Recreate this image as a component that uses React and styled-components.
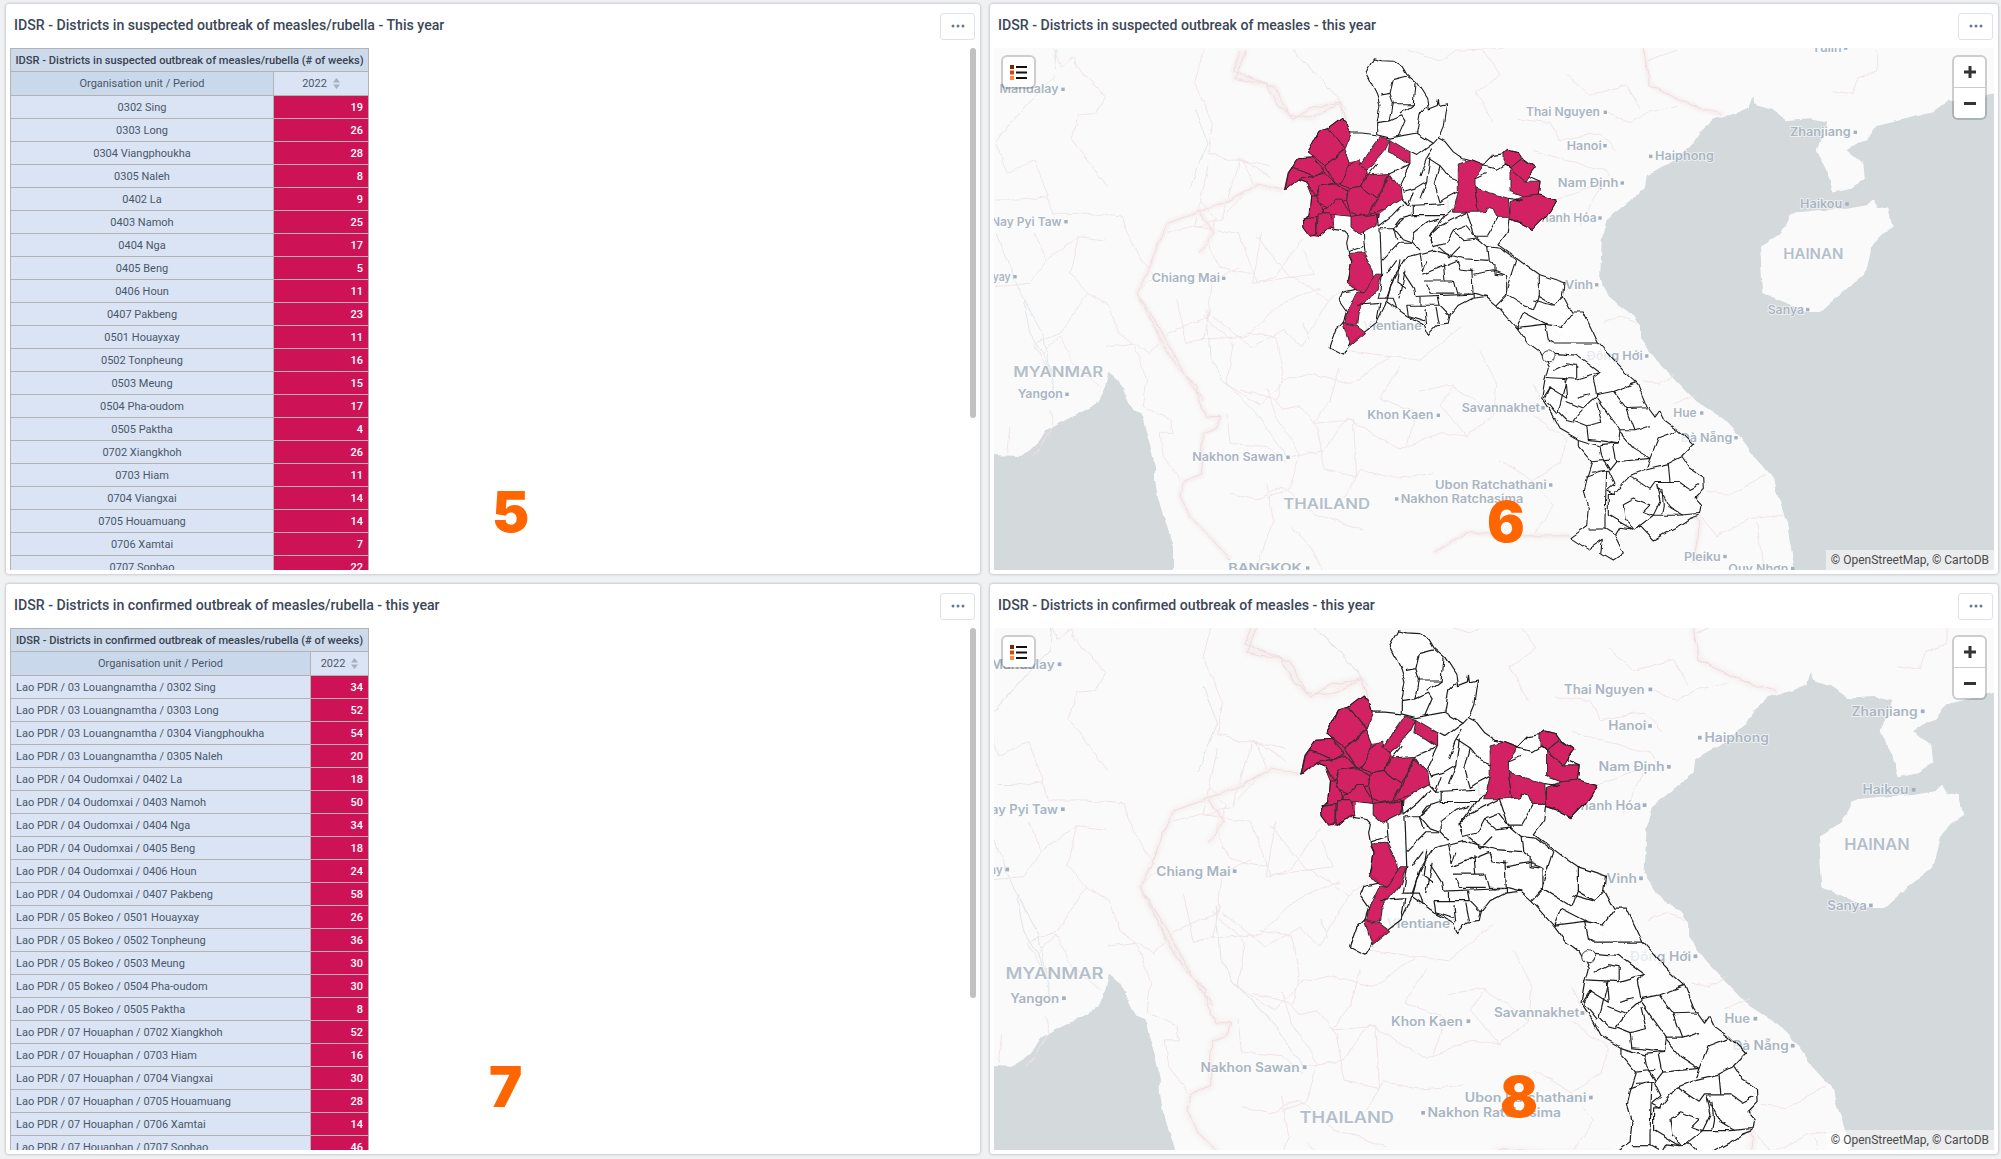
import React from "react";
import styled, { createGlobalStyle } from "styled-components";

const Global = createGlobalStyle`
  html, body { margin: 0; padding: 0; height: 100%; overflow: hidden; background: #f0f1f3; }
  body { font-family: Roboto, "Liberation Sans", sans-serif; }
`;

const Page = styled.div`
  display: grid;
  grid-template-columns: 974px 1008px;
  grid-template-rows: 570px 570px;
  gap: 10px;
  padding: 4px 3px 5px 6px;
`;
const Panel = styled.section`
  position: relative;
  display: flex;
  flex-direction: column;
  min-width: 0;
  background: #fff;
  border-radius: 3px;
  box-shadow: 0 0 3px rgba(64, 75, 90, 0.45);
`;
const PanelHeader = styled.header`
  flex: none;
  height: 44px;
  display: flex;
  align-items: center;
  justify-content: space-between;
  padding: 0 5px 0 8px;
`;
const PanelTitle = styled.h2`
  margin: 0 0 2px;
  font-size: 14.15px;
  font-weight: 500;
  color: #3c4757;
`;
const MenuButton = styled.button`
  width: 35px;
  height: 27px;
  display: flex;
  align-items: center;
  justify-content: center;
  padding: 0;
  background: #fff;
  border: 1px solid #dfe3e8;
  border-radius: 3px;
`;
const PanelBody = styled.div`
  flex: 1;
  min-height: 0;
  padding: 0 4px 4px;
`;
const ScrollArea = styled.div`
  position: relative;
  height: 522px;
  overflow: hidden;
`;
const ScrollThumb = styled.div`
  position: absolute;
  top: 0;
  right: 0;
  width: 6px;
  height: 370px;
  background: #c1c1c1;
  border-radius: 3px;
`;
const Table = styled.table`
  width: 359px;
  table-layout: fixed;
  border-collapse: collapse;
  font-size: 11px;
  color: #4a5768;
`;
const TitleCell = styled.th`
  height: 22px;
  padding: 0;
  background: #cddaec;
  border: 1px solid #b3b3b3;
  font-size: 11.12px;
  font-weight: 500;
  color: #38424f;
  text-align: center;
`;
const HeadCell = styled.th`
  height: 23px;
  padding: 0;
  background: ${(p) => (p.$light ? "#dae4f5" : "#cad8eb")};
  border: 1px solid #b3b3b3;
  font-weight: 400;
  text-align: center;
`;
const NameCell = styled.td`
  height: 22px;
  padding: 0 5px;
  background: #dae4f5;
  border: 1px solid #b3b3b3;
  text-align: ${(p) => (p.$left ? "left" : "center")};
  white-space: nowrap;
`;
const ValueCell = styled.td`
  padding: 0 5px;
  background: #ce1256;
  border: 1px solid #b3b3b3;
  color: #fff;
  font-weight: 500;
  text-align: right;
`;
const SortIcon = styled.svg`
  width: 7px;
  height: 11px;
  margin-left: 6px;
  vertical-align: -2px;
`;
const Digit = styled.span`
  position: absolute;
  left: ${(p) => p.$x}px;
  top: ${(p) => p.$y}px;
  font-family: Inter, sans-serif;
  font-size: 56px;
  font-weight: 900;
  line-height: 1;
  color: #ff6600;
`;
const MapBox = styled.div`
  position: relative;
  height: 522px;
  overflow: hidden;
  background: #fafafa;
`;
const MapSvg = styled.svg`
  display: block;
  width: 1000px;
  height: 522px;
`;
const MapControl = styled.div`
  position: absolute;
  top: 9px;
  ${(p) => (p.$right ? "right: 9px;" : "left: 9px;")}
  width: 31px;
  background: #fff;
  border-radius: 4px;
  box-shadow: 0 0 0 2px rgba(0, 0, 0, 0.18);
`;
const ControlButton = styled.div`
  height: 30px;
  display: flex;
  align-items: center;
  justify-content: center;
  & + & { border-top: 1px solid #ccc; }
`;
const Attribution = styled.div`
  position: absolute;
  right: 0;
  bottom: 0;
  padding: 0 5px;
  height: 20px;
  line-height: 20px;
  font-size: 12px;
  color: #4a4a4a;
  background: rgba(255, 255, 255, 0.5);
`;
const CityText = styled.text`
  font-family: Inter, sans-serif;
  font-size: 11.5px;
  font-weight: 600;
  fill: #a9b5c3;
  stroke: rgba(255, 255, 255, 0.7);
  stroke-width: 1.5px;
  paint-order: stroke;
`;
const CountryText = styled(CityText)`
  font-size: 14px;
  fill: #b4bfcb;
`;

// helpers: every zoomed crop of the map had its own scale, so points stay in crop units
const z3 = (p) => p.map(([x, y]) => [x / 3 + 206, y / 2.904 - 8]);
const z8 = (p) => p.map(([x, y]) => [x / 3 + 606, y / 2.904 - 8]);
const z9 = (p) => p.map(([x, y]) => [x / 3 - 4, y / 3 + 252]);
const z2 = (p) => p.map(([x, y]) => [x / 2.24 - 94, y / 3 - 48]);
const pts = (p) => p.map(([x, y]) => `${x.toFixed(1)},${y.toFixed(1)}`).join(" ");

const eastSea = z8([[1190, 150], [1100, 185], [1050, 175], [1000, 210], [915, 230], [830, 250], [800, 290], [770, 300], [740, 320], [790, 360], [795, 405], [750, 430], [700, 440], [680, 385], [650, 320], [680, 240], [630, 230], [560, 235], [510, 200], [470, 190], [460, 165], [450, 195], [400, 215], [340, 230], [300, 265], [270, 310], [200, 365], [140, 390], [135, 430], [60, 490], [20, 520], [5, 580], [0, 700], [30, 750], [100, 800], [120, 830], [120, 865], [170, 930], [225, 985], [290, 1050], [370, 1100], [420, 1150], [470, 1220], [520, 1270], [525, 1300], [560, 1400], [585, 1545], [1190, 1545]]);
const hainan = z8([[600, 500], [640, 495], [740, 490], [800, 480], [820, 462], [835, 485], [865, 490], [878, 545], [845, 565], [820, 590], [795, 680], [750, 715], [700, 755], [660, 790], [620, 790], [550, 760], [490, 735], [485, 680], [480, 600], [540, 565], [570, 510]]);
const westSea = z9([[0, 465], [90, 468], [120, 450], [150, 420], [165, 395], [210, 370], [260, 345], [290, 330], [325, 310], [345, 260], [355, 215], [385, 240], [410, 290], [430, 330], [455, 340], [465, 385], [480, 430], [495, 500], [495, 540], [505, 600], [525, 660], [552, 740], [552, 830], [0, 830]]);

const nationalBorders = [
  z2([[860, 570], [800, 555], [740, 600], [660, 640], [600, 670], [575, 740], [560, 800], [530, 880]]),
  z9([[450, 0], [490, 70], [520, 140], [570, 210], [620, 260], [625, 300], [650, 350], [690, 350], [680, 385], [640, 400], [635, 440], [635, 525], [580, 545], [570, 590], [600, 650], [660, 710], [720, 780]]),
  z2([[775, 150], [750, 235], [840, 260], [870, 345], [920, 355], [985, 310]]),
  z2([[530, 880], [570, 960], [620, 1080], [650, 1150], [680, 1200]]),
  z3([[120, 30], [100, 90], [200, 130], [235, 190], [280, 230], [330, 200], [420, 180], [440, 240]]),
  z8([[130, 24], [150, 130], [220, 165], [300, 200], [370, 215]]),
  z3([[700, 1490], [800, 1430], [950, 1440], [1110, 1440]]),
  z3([[0, 500], [40, 560], [0, 620]]),
  z8([[280, 1520], [300, 1400], [270, 1340]]),
];
const provinceLines = [
  z2([[345, 150], [360, 200], [390, 170], [395, 200], [460, 290], [440, 340], [400, 345], [385, 420], [420, 480], [465, 560]]),
  z2([[680, 150], [660, 250], [700, 370], [690, 460], [740, 480], [770, 480], [830, 530]]),
  z2([[215, 430], [240, 520], [300, 480], [330, 580], [340, 640], [420, 640], [495, 650], [510, 700], [540, 780], [570, 830], [525, 880]]),
  z2([[212, 600], [270, 600], [330, 590]]),
  z2([[460, 720], [400, 710], [380, 820], [420, 880], [470, 920], [490, 1000], [560, 1060]]),
  z2([[690, 500], [660, 680], [760, 700], [800, 850], [840, 830], [900, 720]]),
  z2([[810, 700], [790, 850], [880, 830], [960, 900], [1000, 860]]),
  z2([[900, 1040], [960, 900]]),
  z2([[600, 700], [720, 660], [760, 480], [830, 500]]),
  z2([[330, 780], [400, 710]]),
  z2([[215, 860], [290, 850], [330, 780], [300, 700]]),
  z2([[420, 880], [360, 1000], [300, 1030], [340, 1130]]),
  z2([[560, 1060], [600, 1000], [690, 950], [700, 840], [760, 800]]),
  z2([[700, 950], [790, 1040], [860, 990], [900, 1040]]),
  z9([[350, 140], [430, 130], [470, 240], [460, 320], [540, 360], [550, 400], [510, 400], [520, 470], [570, 540]]),
  z9([[710, 340], [720, 430], [830, 440], [890, 490]]),
  z9([[750, 270], [850, 295], [880, 330], [930, 320], [980, 380], [990, 430], [1005, 510], [1100, 530]]),
  z9([[770, 100], [860, 110], [880, 210], [860, 300]]),
  z9([[160, 160], [210, 110], [250, 190], [330, 260]]),
  z9([[180, 330], [190, 380], [130, 470]]),
  z9([[60, 380], [50, 460]]),
  z9([[720, 580], [800, 600], [880, 560], [970, 640], [1120, 690]]),
  z9([[830, 550], [850, 660], [800, 800]]),
  z9([[560, 0], [590, 130], [640, 120], [660, 30]]),
  z9([[1050, 200], [1020, 300], [970, 370], [1090, 360], [1100, 530]]),
  z9([[900, 680], [960, 740], [1000, 810]]),
  z3([[0, 470], [50, 520], [20, 580], [60, 660], [160, 680]]),
  z3([[170, 570], [270, 690], [340, 680], [310, 610]]),
  z3([[130, 350], [160, 420], [80, 500]]),
  z3([[0, 870], [140, 860], [250, 760], [360, 720]]),
  z3([[10, 800], [100, 880], [80, 1000], [180, 1060], [250, 990], [330, 970]]),
  z3([[430, 900], [580, 920], [660, 930], [790, 830]]),
  z3([[330, 970], [450, 1000], [570, 920]]),
  z3([[660, 1020], [750, 1000], [800, 1030], [880, 1090], [890, 1000], [840, 900]]),
  z3([[500, 1130], [600, 1190], [720, 1140], [800, 1150], [880, 1090]]),
  z3([[200, 1010], [230, 1100], [300, 1200], [270, 1300], [200, 1330]]),
  z3([[270, 1210], [370, 1190], [440, 1100], [500, 1130]]),
  z3([[430, 1330], [480, 1250], [580, 1270], [700, 1260]]),
  z3([[970, 1080], [1030, 1070], [1000, 1000]]),
  z3([[1080, 1230], [1000, 1280], [1060, 1350], [1000, 1440]]),
  z3([[850, 30], [900, 100], [830, 150], [880, 240]]),
  z3([[620, 30], [720, 60], [770, 30], [910, 24]]),
  z3([[950, 230], [1050, 240], [1080, 290], [1200, 270], [1250, 320]]),
  z3([[1000, 320], [1100, 350], [1220, 380], [1250, 420]]),
  z3([[1050, 470], [1200, 420], [1140, 540]]),
  z3([[1340, 60], [1430, 30]]),
  z3([[600, 950], [540, 1040], [650, 1080], [620, 1180]]),
  z3([[760, 1000], [720, 1060], [800, 1150]]),
  z3([[1000, 1090], [1100, 1160], [1080, 1230]]),
  z3([[900, 1220], [1000, 1280]]),
  z3([[1100, 100], [1170, 160], [1280, 130], [1320, 200]]),
  z8([[320, 1310], [390, 1320], [500, 1265]]),
  z8([[300, 1380], [350, 1440], [450, 1390], [550, 1380]]),
  z8([[490, 1538], [470, 1400]]),
  z8([[10, 820], [60, 805], [110, 820]]),
  z8([[130, 985], [180, 1000], [225, 970]]),
  z8([[220, 1060], [290, 1030]]),
  z8([[700, 150], [760, 160], [770, 110], [830, 90], [830, 30]]),
  z8([[20, 210], [90, 240], [150, 210], [230, 190]]),
];
const rivers = [
  z2([[350, 150], [345, 230], [250, 370], [215, 420]]),
  z2([[880, 150], [950, 250], [1000, 330]]),
  z2([[660, 330], [690, 430], [650, 560]]),
  z2([[215, 700], [270, 880], [320, 1000], [340, 1130]]),
  z9([[100, 0], [120, 100], [170, 180], [200, 300]]),
  z9([[650, 30], [660, 170], [700, 240], [800, 340], [890, 470]]),
  z3([[310, 820], [330, 870]]),
  z3([[1060, 840], [1100, 870]]),
];

const laos = z3([[520, 55], [545, 60], [580, 62], [605, 75], [620, 100], [650, 125], [680, 170], [685, 200], [712, 190], [715, 170], [718, 190], [740, 185], [735, 215], [730, 250], [715, 285], [735, 295], [760, 325], [790, 345], [810, 350], [850, 365], [880, 335], [912, 330], [925, 318], [955, 325], [970, 345], [1005, 370], [985, 395], [1020, 410], [1015, 450], [1068, 465], [1050, 495], [1030, 520], [1000, 550], [960, 530], [930, 520], [925, 555], [895, 595], [930, 620], [985, 660], [1015, 680], [1095, 705], [1090, 745], [1115, 790], [1150, 790], [1195, 880], [1240, 930], [1270, 960], [1310, 995], [1335, 1055], [1365, 1095], [1380, 1075], [1395, 1105], [1430, 1130], [1478, 1175], [1445, 1208], [1470, 1245], [1508, 1270], [1510, 1305], [1485, 1330], [1503, 1350], [1498, 1380], [1470, 1390], [1440, 1410], [1400, 1430], [1360, 1452], [1320, 1412], [1295, 1420], [1260, 1415], [1245, 1440], [1270, 1490], [1240, 1510], [1205, 1490], [1210, 1450], [1165, 1480], [1110, 1445], [1160, 1410], [1165, 1360], [1150, 1310], [1160, 1270], [1175, 1225], [1135, 1180], [1135, 1160], [1080, 1130], [1055, 1085], [1025, 1040], [1035, 985], [1045, 950], [1020, 905], [985, 880], [950, 835], [890, 770], [860, 745], [815, 750], [775, 770], [750, 800], [745, 825], [710, 830], [685, 855], [670, 825], [620, 800], [590, 780], [560, 760], [530, 820], [490, 850], [445, 890], [430, 915], [390, 895], [410, 840], [430, 820], [440, 790], [415, 755], [425, 730], [470, 720], [445, 700], [455, 640], [445, 615], [440, 590], [445, 565], [435, 555], [405, 550], [390, 540], [355, 570], [330, 565], [312, 545], [310, 520], [330, 510], [335, 450], [320, 415], [290, 405], [253, 437], [265, 385], [295, 345], [340, 342], [322, 328], [360, 262], [385, 255], [425, 225], [440, 240], [450, 270], [485, 270], [530, 275], [530, 240], [540, 190], [530, 160], [497, 95]]);

// the whole north-west block, laid under the single districts so no gaps show between them
const outbreakBlock = z3([[385, 255], [425, 225], [440, 240], [450, 275], [435, 315], [450, 355], [475, 350], [500, 375], [505, 390], [570, 388], [600, 430], [605, 460], [555, 490], [535, 505], [530, 540], [480, 565], [450, 540], [450, 515], [405, 510], [405, 545], [385, 545], [355, 570], [330, 570], [312, 545], [310, 520], [330, 510], [335, 450], [320, 415], [290, 405], [253, 437], [265, 385], [295, 345], [340, 342], [322, 328], [360, 262]]);
const outbreak = [
  [[385, 255], [425, 225], [440, 240], [450, 275], [435, 315], [410, 285]],
  [[360, 262], [385, 255], [410, 285], [435, 315], [375, 365], [345, 342], [322, 328]],
  [[435, 318], [450, 355], [445, 390], [415, 420], [405, 415], [375, 365]],
  [[295, 345], [340, 342], [375, 380], [345, 395], [275, 372]],
  [[275, 372], [345, 395], [295, 405], [255, 437], [265, 390]],
  [[295, 405], [345, 395], [375, 385], [405, 415], [355, 425], [345, 450], [320, 415]],
  [[355, 425], [405, 418], [445, 440], [440, 465], [405, 475], [385, 488], [360, 478], [350, 450]],
  [[335, 450], [350, 450], [360, 478], [370, 510], [355, 515], [310, 520], [330, 510]],
  [[370, 490], [385, 488], [405, 465], [425, 465], [445, 495], [450, 515], [405, 510], [370, 505]],
  [[420, 420], [455, 360], [475, 350], [500, 375], [485, 425], [445, 430]],
  [[445, 430], [485, 425], [530, 460], [505, 505], [475, 510], [450, 500], [440, 465]],
  [[485, 425], [500, 392], [570, 388], [530, 460]],
  [[570, 392], [600, 430], [605, 460], [555, 490], [510, 505], [535, 460]],
  [[450, 515], [535, 505], [530, 540], [480, 565], [450, 540]],
  [[310, 520], [350, 515], [350, 565], [330, 570], [312, 545]],
  [[355, 505], [390, 505], [405, 545], [385, 545], [355, 570], [350, 565]],
  [[480, 365], [510, 320], [540, 280], [570, 290], [555, 320], [520, 360], [500, 375]],
  [[570, 290], [630, 325], [630, 360], [600, 340], [565, 325]],
  [[810, 350], [850, 365], [825, 400], [825, 430], [835, 500], [760, 500], [775, 440], [775, 360]],
  [[825, 430], [925, 460], [930, 515], [890, 515], [880, 490], [860, 485], [855, 498], [835, 500]],
  [[930, 470], [970, 455], [1020, 450], [1068, 465], [1050, 495], [1030, 520], [1000, 550], [960, 530], [930, 520]],
  [[930, 372], [975, 410], [1020, 410], [1015, 450], [970, 455], [930, 440]],
  [[930, 372], [965, 345], [1005, 370], [985, 395], [975, 410]],
  [[912, 330], [925, 318], [955, 325], [965, 345], [930, 370], [912, 360]],
  [[445, 620], [490, 618], [520, 670], [525, 700], [490, 735], [445, 710], [455, 640]],
  [[530, 680], [548, 680], [530, 725], [475, 790], [470, 825], [435, 820], [440, 790], [470, 730], [490, 735]],
  [[428, 820], [470, 828], [500, 850], [450, 890]],
].map(z3);

const districtLines = [
  [[570, 155], [580, 115], [620, 105]],
  [[570, 155], [540, 160]],
  [[570, 155], [580, 185], [570, 235], [605, 220], [615, 235], [595, 280]],
  [[580, 185], [640, 185], [645, 125]],
  [[640, 185], [600, 215]],
  [[530, 240], [570, 235]],
  [[530, 275], [570, 285], [595, 280], [650, 270], [660, 215], [680, 195]],
  [[650, 270], [700, 300], [650, 335], [630, 325]],
  [[700, 300], [712, 288]],
  [[695, 315], [680, 340], [660, 395]],
  [[630, 360], [600, 420], [610, 440], [645, 430], [680, 410], [690, 340]],
  [[720, 365], [705, 420], [720, 470], [735, 460], [775, 440]],
  [[720, 365], [680, 340]],
  [[720, 365], [750, 400], [775, 410]],
  [[605, 460], [625, 480], [640, 440]],
  [[625, 480], [640, 480], [735, 475]],
  [[680, 410], [660, 460]],
  [[505, 390], [530, 360]],
  [[600, 375], [630, 360]],
  [[570, 388], [600, 375]],
  [[850, 365], [890, 375], [915, 360], [930, 372]],
  [[825, 400], [860, 385]],
  [[925, 460], [965, 465]],
  [[530, 505], [535, 540], [575, 510], [610, 475]],
  [[540, 545], [580, 545], [610, 580], [640, 590]],
  [[580, 545], [600, 520], [640, 510], [640, 480]],
  [[640, 510], [735, 510], [760, 490]],
  [[735, 510], [690, 570], [700, 600]],
  [[540, 545], [545, 680]],
  [[490, 560], [495, 620]],
  [[445, 615], [490, 600]],
  [[545, 640], [595, 590], [640, 590], [660, 610]],
  [[610, 520], [580, 545], [590, 580]],
  [[640, 590], [640, 560], [680, 530], [720, 520]],
  [[685, 570], [720, 540], [800, 500]],
  [[690, 570], [700, 600], [740, 590], [760, 555], [800, 540], [830, 575]],
  [[800, 500], [825, 570], [860, 570], [890, 520]],
  [[760, 555], [790, 580], [830, 575], [860, 600], [865, 640]],
  [[715, 600], [750, 630], [780, 600]],
  [[660, 620], [700, 610], [790, 635], [865, 640], [885, 655], [885, 680], [920, 685]],
  [[620, 630], [660, 620]],
  [[620, 630], [580, 690], [560, 760]],
  [[610, 675], [640, 720], [645, 745]],
  [[615, 670], [600, 750]],
  [[590, 640], [560, 680]],
  [[548, 680], [535, 750]],
  [[660, 620], [670, 670], [680, 640]],
  [[670, 680], [720, 660], [770, 640], [780, 665], [820, 670]],
  [[675, 700], [720, 700], [760, 700], [770, 735], [815, 735]],
  [[680, 710], [690, 735], [760, 735]],
  [[815, 660], [820, 750]],
  [[820, 680], [880, 670], [920, 685], [920, 740], [890, 770]],
  [[820, 735], [860, 745]],
  [[645, 745], [820, 738]],
  [[620, 770], [660, 770], [660, 745]],
  [[660, 770], [720, 770], [715, 745]],
  [[620, 770], [625, 800], [675, 815]],
  [[675, 780], [680, 830]],
  [[705, 775], [715, 825]],
  [[720, 770], [750, 800]],
  [[530, 750], [580, 750], [590, 780]],
  [[475, 770], [540, 765], [530, 820]],
  [[560, 750], [585, 680]],
  [[950, 640], [925, 715], [920, 740]],
  [[860, 600], [900, 605], [950, 640]],
  [[1015, 680], [1015, 745], [1060, 770], [1090, 745]],
  [[915, 735], [1000, 785], [1015, 745]],
  [[970, 790], [950, 835], [1035, 825], [1085, 835], [1115, 795]],
  [[1000, 755], [1055, 770]],
  [[970, 790], [1040, 825]],
  [[1035, 825], [1045, 870], [1060, 880], [1195, 880]],
  [[1060, 910], [1130, 915], [1200, 965]],
  [[1040, 980], [1130, 985], [1200, 965], [1180, 980]],
  [[1130, 945], [1130, 985]],
  [[1095, 985], [1100, 1040], [1050, 1010], [1030, 1040]],
  [[1180, 980], [1190, 1035], [1150, 1070], [1120, 1105], [1160, 1120]],
  [[1100, 1050], [1150, 1070]],
  [[1100, 980], [1075, 1080], [1100, 1105], [1120, 1110]],
  [[1050, 1010], [1035, 1045], [1070, 1085]],
  [[1190, 1030], [1240, 1020], [1310, 995]],
  [[1240, 1020], [1280, 1070], [1350, 1068]],
  [[1280, 1070], [1305, 1135], [1350, 1120]],
  [[1190, 1050], [1205, 1110], [1160, 1120], [1165, 1160], [1255, 1170], [1260, 1135], [1305, 1135]],
  [[1190, 1040], [1250, 1120], [1260, 1135]],
  [[1260, 1140], [1300, 1185], [1350, 1215]],
  [[1350, 1215], [1375, 1155], [1430, 1135]],
  [[1255, 1170], [1200, 1175], [1205, 1210]],
  [[1240, 1175], [1250, 1225], [1350, 1215], [1340, 1240]],
  [[1205, 1210], [1230, 1250], [1250, 1225]],
  [[1135, 1160], [1200, 1180]],
  [[1175, 1225], [1230, 1220]],
  [[1175, 1255], [1225, 1250], [1245, 1290], [1220, 1310]],
  [[1155, 1270], [1220, 1250], [1215, 1385]],
  [[1215, 1420], [1165, 1420]],
  [[1215, 1385], [1215, 1420], [1250, 1440]],
  [[1220, 1310], [1240, 1320], [1290, 1265], [1340, 1245]],
  [[1290, 1265], [1350, 1305]],
  [[1350, 1305], [1365, 1285], [1440, 1285], [1470, 1305], [1500, 1290]],
  [[1340, 1245], [1405, 1230], [1445, 1210]],
  [[1405, 1230], [1410, 1285]],
  [[1245, 1320], [1225, 1320], [1225, 1380], [1295, 1420]],
  [[1270, 1345], [1300, 1330], [1350, 1350], [1330, 1370], [1360, 1380], [1380, 1340], [1370, 1290]],
  [[1270, 1345], [1275, 1390], [1300, 1420], [1320, 1410], [1360, 1380]],
  [[1360, 1380], [1430, 1380], [1498, 1375]],
  [[1370, 1290], [1410, 1360], [1445, 1380]],
  [[1385, 1300], [1390, 1350], [1385, 1375]],
  [[600, 640], [590, 700], [620, 720]],
  [[730, 650], [735, 700]],
  [[1060, 960], [1100, 940], [1130, 945]],
  [[1130, 1040], [1170, 1030]],
].map(z3);

// name, left, right, middle y, dot x (map coordinates of the first map)
const cities = [
  ["Mandalay", 5.6, 64.5, 41.3, 69],
  ["Nay Pyi Taw", -3, 67.6, 173.7, 72],
  ["Pyay", -8, 16.7, 228.7, 21],
  ["Chiang Mai", 157.8, 226, 230.3, 229.7],
  ["Yangon", 23.7, 68.7, 346.3, 73],
  ["Nakhon Sawan", 198.3, 289.3, 409.3, 294],
  ["BANGKOK", 234.3, 307.7, 520, 313.7],
  ["Khon Kaen", 373.3, 439.3, 367.3, 444.3],
  ["Savannakhet", 467.7, 546, 359.8, 549],
  ["Ubon Ratchathani", 441, 552.7, 437, 556.7],
  ["Nakhon Ratchasima", 406.7, 529.3, 451, 402.7],
  ["Vientiane", 369.3, 427.7, 277.8],
  ["Thai Nguyen", 532, 606, 64.3, 611.3],
  ["Hanoi", 572.7, 607.7, 97.7, 611],
  ["Haiphong", 661, 720, 108.4, 656.7],
  ["Nam Định", 563.7, 624.3, 135, 628.3],
  ["Thanh Hóa", 539.3, 602.7, 170, 606],
  ["Vinh", 571, 599, 236.8, 602.7],
  ["Đồng Hới", 592.7, 648.7, 308, 652.7],
  ["Hue", 679.3, 702.7, 365, 707.7],
  ["Đà Nẵng", 686.7, 738.3, 389.7, 742],
  ["Pleiku", 690, 726.7, 508.5, 731],
  ["Quy Nhơn", 734.3, 794.3, 520.6, 798.7],
  ["Zhanjiang", 796, 856.7, 84.3, 861.3],
  ["Haikou", 806, 848.3, 156, 853],
  ["Sanya", 773.7, 810, 261.6, 813.7],
  ["Yulin", 817.7, 847.7, 0, 851.7],
];
const countries = [
  ["MYANMAR", 19.3, 109.3, 323.7],
  ["THAILAND", 289.3, 376, 455.3],
  ["HAINAN", 789.3, 849.3, 205.5],
  ["LAOS", 452, 489, 157],
];

function LaosMap({ zoomed }) {
  return (
    <MapBox>
      <MapSvg viewBox="0 0 1000 522">
        <defs>
          <filter id="wobble" filterUnits="userSpaceOnUse" x="-20" y="-20" width="1040" height="570">
            <feTurbulence type="fractalNoise" baseFrequency="0.08" numOctaves="2" seed="4" />
            <feDisplacementMap in="SourceGraphic" scale="5" xChannelSelector="R" yChannelSelector="G" />
            <feGaussianBlur stdDeviation="0.25" />
          </filter>
          <filter id="soft" x="-5%" y="-5%" width="110%" height="110%">
            <feGaussianBlur stdDeviation="1.8" />
          </filter>
        </defs>
        <g transform={zoomed ? "translate(-9.6 -9) scale(1.0894 1.095)" : undefined}>
          <g filter="url(#wobble)">
            <polygon points={pts(eastSea)} fill="#d4d9dc" />
            <polygon points={pts(hainan)} fill="#fafafa" />
            <polygon points={pts(westSea)} fill="#d4d9dc" />
            {rivers.map((r, i) => (
              <polyline key={i} points={pts(r)} fill="none" stroke="#e2e7eb" strokeWidth="1" />
            ))}
            {provinceLines.map((l, i) => (
              <polyline key={i} points={pts(l)} fill="none" stroke="#f1e2e5" strokeWidth="0.9" />
            ))}
          </g>
          <g filter="url(#soft)">
            {nationalBorders.map((l, i) => (
              <polyline key={i} points={pts(l)} fill="none" stroke="#f6efef" strokeWidth="5" />
            ))}
          </g>
          <g filter="url(#wobble)">
            {nationalBorders.map((l, i) => (
              <polyline key={i} points={pts(l)} fill="none" stroke="#efdde0" strokeWidth="1" />
            ))}
          </g>
          {cities.map(([name, x1, x2, y, dot]) => (
            <g key={name}>
              <CityText x={x1} y={y} textLength={x2 - x1} lengthAdjust="spacingAndGlyphs" dominantBaseline="central">{name}</CityText>
              {dot !== undefined && <rect x={dot - 1.7} y={y - 1.7} width="3.4" height="3.4" fill="#a3afbd" />}
            </g>
          ))}
          {countries.map(([name, x1, x2, y]) => (
            <CountryText key={name} x={x1} y={y} textLength={x2 - x1} lengthAdjust="spacingAndGlyphs" dominantBaseline="central">{name}</CountryText>
          ))}
          <g filter="url(#wobble)" strokeLinejoin="round">
            <polygon points={pts(laos)} fill="#fff" fillOpacity="0.72" stroke="#1c1c1c" strokeWidth="1.1" />
            <g opacity="0.92">
              <polygon points={pts(outbreakBlock)} fill="#ce1256" />
              {outbreak.map((d, i) => (
                <polygon key={i} points={pts(d)} fill="#ce1256" stroke="#2b1a20" strokeWidth="1" />
              ))}
            </g>
            {districtLines.map((l, i) => (
              <polyline key={i} points={pts(l)} fill="none" stroke="#1c1c1c" strokeWidth="1.1" />
            ))}
            <circle cx={(1045 / 3 + 206).toFixed(1)} cy={(920 / 2.904 - 8).toFixed(1)} r="6" fill="#fff" stroke="#1c1c1c" strokeWidth="0.8" />
          </g>
        </g>
      </MapSvg>
      <MapControl>
        <ControlButton>
          <svg width="17" height="16" viewBox="0 0 17 16">
            <rect x="0" y="1" width="4" height="4" fill="#7f2704" />
            <rect x="0" y="6.500" width="4" height="4" fill="#d94801" />
            <rect x="0" y="12" width="4" height="4" fill="#fd8d3c" />
            <rect x="6" y="2" width="11" height="2" fill="#111" />
            <rect x="6" y="7.500" width="11" height="2" fill="#111" />
            <rect x="6" y="13" width="11" height="2" fill="#111" />
          </svg>
        </ControlButton>
      </MapControl>
      <MapControl $right>
        <ControlButton>
          <svg width="12" height="12" viewBox="0 0 12 12"><path d="M4.500 0h3v4.500h4.500v3H7.500V12h-3V7.500H0v-3h4.500z" fill="#333" /></svg>
        </ControlButton>
        <ControlButton>
          <svg width="12" height="3" viewBox="0 0 12 3"><rect width="12" height="3" fill="#333" /></svg>
        </ControlButton>
      </MapControl>
      <Attribution>© OpenStreetMap, © CartoDB</Attribution>
    </MapBox>
  );
}

const suspected = [
  ["0302 Sing", 19], ["0303 Long", 26], ["0304 Viangphoukha", 28], ["0305 Naleh", 8], ["0402 La", 9],
  ["0403 Namoh", 25], ["0404 Nga", 17], ["0405 Beng", 5], ["0406 Houn", 11], ["0407 Pakbeng", 23],
  ["0501 Houayxay", 11], ["0502 Tonpheung", 16], ["0503 Meung", 15], ["0504 Pha-oudom", 17], ["0505 Paktha", 4],
  ["0702 Xiangkhoh", 26], ["0703 Hiam", 11], ["0704 Viangxai", 14], ["0705 Houamuang", 14], ["0706 Xamtai", 7],
  ["0707 Sopbao", 22],
];
const confirmedWeeks = [34, 52, 54, 20, 18, 50, 34, 18, 24, 58, 26, 36, 30, 30, 8, 52, 16, 30, 28, 14, 46];
const province = (name) => {
  if (name.startsWith("03")) return "03 Louangnamtha";
  if (name.startsWith("04")) return "04 Oudomxai";
  if (name.startsWith("05")) return "05 Bokeo";
  return "07 Houaphan";
};
const confirmed = suspected.map(([name], i) => [`Lao PDR / ${province(name)} / ${name}`, confirmedWeeks[i]]);

function Dots() {
  return (
    <svg width="14" height="4" viewBox="0 0 14 4" fill="#6b7a90">
      <circle cx="2" cy="2" r="1.5" /><circle cx="7" cy="2" r="1.5" /><circle cx="12" cy="2" r="1.5" />
    </svg>
  );
}

function PivotTable({ title, rows, firstWidth, left }) {
  return (
    <ScrollArea>
      <Table>
        <colgroup><col style={{ width: firstWidth }} /><col /></colgroup>
        <thead>
          <tr><TitleCell colSpan={2}>{title}</TitleCell></tr>
          <tr>
            <HeadCell>Organisation unit / Period</HeadCell>
            <HeadCell $light>
              2022
              <SortIcon viewBox="0 0 7 11"><path d="M3.500 0L7 4.500H0zM3.500 11L0 6.500h7z" fill="#a5b0bd" /></SortIcon>
            </HeadCell>
          </tr>
        </thead>
        <tbody>
          {rows.map(([name, value]) => (
            <tr key={name}>
              <NameCell $left={left}>{name}</NameCell>
              <ValueCell>{value}</ValueCell>
            </tr>
          ))}
        </tbody>
      </Table>
      <ScrollThumb />
    </ScrollArea>
  );
}

function Card({ title, children }) {
  return (
    <Panel>
      <PanelHeader>
        <PanelTitle>{title}</PanelTitle>
        <MenuButton><Dots /></MenuButton>
      </PanelHeader>
      <PanelBody>{children}</PanelBody>
    </Panel>
  );
}

export default function App() {
  return (
    <Page>
      <Global />
      <Card title="IDSR - Districts in suspected outbreak of measles/rubella - This year">
        <PivotTable title="IDSR - Districts in suspected outbreak of measles/rubella (# of weeks)" rows={suspected} firstWidth={263} />
        <Digit $x={486} $y={480}>5</Digit>
      </Card>
      <Card title="IDSR - Districts in suspected outbreak of measles - this year">
        <LaosMap />
        <Digit $x={497} $y={490}>6</Digit>
      </Card>
      <Card title="IDSR - Districts in confirmed outbreak of measles/rubella - this year">
        <PivotTable title="IDSR - Districts in confirmed outbreak of measles/rubella (# of weeks)" rows={confirmed} firstWidth={300} left />
        <Digit $x={483} $y={475}>7</Digit>
      </Card>
      <Card title="IDSR - Districts in confirmed outbreak of measles - this year">
        <LaosMap zoomed />
        <Digit $x={510} $y={485}>8</Digit>
      </Card>
    </Page>
  );
}
